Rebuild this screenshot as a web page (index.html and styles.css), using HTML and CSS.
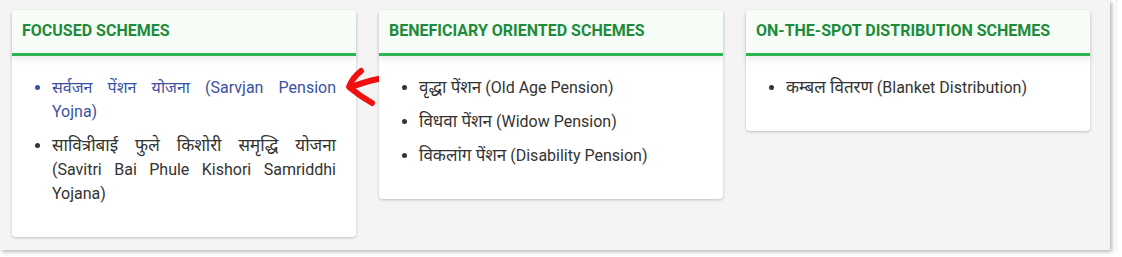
FILE: index.html
```html
<!DOCTYPE html>
<html lang="hi">
<head>
<meta charset="utf-8">
<title>Schemes</title>
<link rel="stylesheet" href="styles.css">
</head>
<body>
<div class="page">
  <section class="section">
    <div class="card">
      <div class="card-head">FOCUSED SCHEMES</div>
      <div class="card-body">
        <ul class="list justify">
          <li class="link"><a href="#" class="hi-link">सर्वजन पेंशन योजना (Sarvjan Pension Yojna)</a></li>
          <li><span class="hi">सावित्रीबाई फुले किशोरी समृद्धि योजना</span> (Savitri Bai Phule Kishori Samriddhi Yojana)</li>
        </ul>
      </div>
      <svg class="arrow" width="46" height="42" viewBox="0 0 46 42">
        <path d="M17 5 C 12 9, 7 15, 5 21 C 11 26, 19 32, 28 37" fill="none" stroke="#f01010" stroke-width="6" stroke-linecap="round" stroke-linejoin="round"/>
        <path d="M7 21 C 18 17, 30 13, 41 12" fill="none" stroke="#f01010" stroke-width="6" stroke-linecap="round"/>
      </svg>
    </div>
    <div class="card">
      <div class="card-head">BENEFICIARY ORIENTED SCHEMES</div>
      <div class="card-body">
        <ul class="list">
          <li><span class="hi">वृद्धा पेंशन</span> (Old Age Pension)</li>
          <li><span class="hi">विधवा पेंशन</span> (Widow Pension)</li>
          <li><span class="hi">विकलांग पेंशन</span> (Disability Pension)</li>
        </ul>
      </div>
    </div>
    <div class="card">
      <div class="card-head">ON-THE-SPOT DISTRIBUTION SCHEMES</div>
      <div class="card-body">
        <ul class="list">
          <li><span class="hi">कम्बल वितरण</span> (Blanket Distribution)</li>
        </ul>
      </div>
    </div>
  </section>
  <div class="rail"></div>
</div>
</body>
</html>
```

FILE: styles.css
```css
html, body {
  margin: 0;
  padding: 0;
  background: #ffffff;
}
body {
  font-family: Roboto, "Noto Sans", "Liberation Sans", sans-serif;
  color: #333333;
  width: 1122px;
  height: 257px;
  overflow: hidden;
}
.page {
  display: flex;
  height: 257px;
}
.section {
  width: 1110px;
  height: 250px;
  box-sizing: border-box;
  background: #f4f4f4;
  box-shadow: 2px 2px 4px rgba(0, 0, 0, 0.28);
  padding: 10px 0 0 12px;
  display: flex;
  align-items: flex-start;
  gap: 23px;
  flex: none;
}
.rail {
  margin-left: 6px;
  width: 0;
  height: 250px;
  border-left: 1px dotted #e2e2e2;
}
.card {
  position: relative;
  width: 344px;
  background: #ffffff;
  border-radius: 4px;
  box-shadow: 0 1px 3px rgba(0, 0, 0, 0.22);
  flex: none;
}
.card-head {
  height: 43px;
  box-sizing: content-box;
  line-height: 42px;
  padding: 0 10px;
  background: #f6fdf7;
  border-radius: 4px 4px 0 0;
  border-bottom: 3px solid #2db350;
  color: #1e8b3a;
  font-weight: 700;
  font-size: 16px;
  box-shadow: 0 4px 6px rgba(0, 0, 0, 0.08);
  position: relative;
}
.card-body {
  padding: 20px 20px 31px 0;
}
.list {
  margin: 0;
  padding: 0 0 0 40px;
  font-size: 16px;
  line-height: 24px;
}
.list li {
  margin-bottom: 10px;
}
.list li:last-child {
  margin-bottom: 0;
}
.hi {
  font-size: 17px;
  line-height: 20px;
}
.justify li {
  text-align: justify;
}
.list li.link {
  color: #3b51a3;
}
.list li.link a {
  color: #3b51a3;
  text-decoration: none;
}
.arrow {
  position: absolute;
  left: 332px;
  top: 56px;
}
```
